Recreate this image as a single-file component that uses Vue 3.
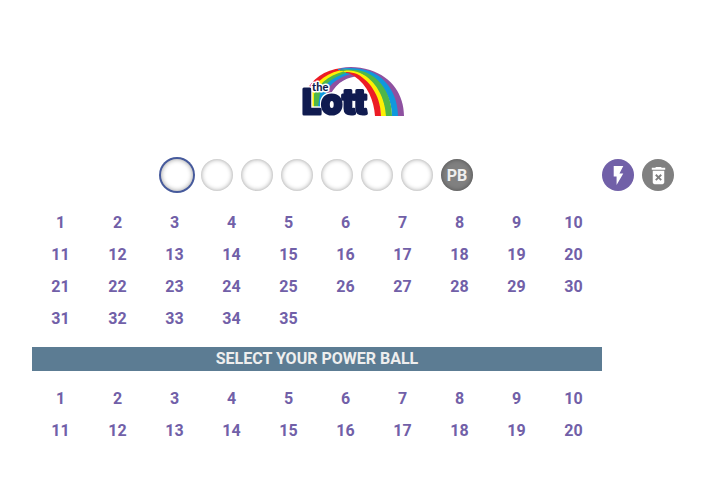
<script setup>
import { ref } from 'vue'

const mainNumbers = Array.from({ length: 35 }, (_, i) => i + 1)
const powerNumbers = Array.from({ length: 20 }, (_, i) => i + 1)
const picks = ref([])
const power = ref(null)

function pick(n) {
  if (picks.value.includes(n)) picks.value = picks.value.filter((p) => p !== n)
  else if (picks.value.length < 7) picks.value.push(n)
}
function quickPick() {
  picks.value = [...mainNumbers].sort(() => Math.random() - 0.5).slice(0, 7)
  power.value = 1 + Math.floor(Math.random() * 20)
}
function clear() {
  picks.value = []
  power.value = null
}
</script>

<template>
  <main class="page">
    <header class="brand">
      <svg class="logo" viewBox="0 0 102 50" role="img" aria-label="the Lott">
        <!-- near end of the rainbow -->
        <path fill="#ec1c24" d="M3 26 C10 12 22 3 40 1 L48 3 C30 6 18 14 8 30Z" />
        <path fill="#fdf003" d="M7 27 C14 14 26 5 44 2 L52 4 C34 8 22 16 14 32 L13 40 L9 40Z" />
        <path fill="#4fb648" d="M12 27 C19 14 30 6 49 3 L54 6 C38 10 28 18 22 30 L18 40 L12 40Z" />
        <path fill="#0f98dd" d="M18 26 C24 15 35 7 52 4 L57 7 C42 11 31 18 27 28 L22 40 L16 40Z" />
        <path fill="#8e51a0" d="M24 26 C28 16 38 9 53 6 L58 9 C45 10 36 14 28 28Z" />
        <!-- far end of the rainbow -->
        <path fill="#8e51a0" d="M39 1 C48 -1 58 0 68 3 C90 10 102 28 102 49 H95 C95 30 84 12 66 5 C57 2 48 1 39 2Z" />
        <path fill="#0f98dd" d="M36 2 C46 0 58 1 67 4 C86 11 96 30 96 49 H90 C90 31 80 14 63 6 C54 3 44 2 36 3Z" />
        <path fill="#4fb648" d="M38 3 C46 2 55 2 63 5 C81 12 90 31 90 49 H83 C83 32 74 15 59 7 C51 4 45 4 38 4Z" />
        <path fill="#fdf003" d="M42 4 C48 3 53 4 58 6 C74 13 83 31 84 49 H79 C78 33 70 16 55 8 C50 6 46 5 42 5Z" />
        <path fill="#ec1c24" d="M44 5 C49 5 52 6 55 7 C70 15 79 32 79 49 H73 C72 34 66 18 52 9 C49 7 47 6 44 6Z" />
        <text class="logo-word" x="0" y="47">Lott</text>
        <text class="logo-the" x="10" y="24">the</text>
      </svg>
    </header>

    <section class="ticket">
      <div class="balls">
        <span v-for="i in 7" :key="i" class="ball" :class="{ active: i === picks.length + 1 }">{{ picks[i - 1] }}</span>
        <span class="ball power">{{ power ?? 'PB' }}</span>
      </div>
      <div class="actions">
        <button type="button" class="action quick" aria-label="Quick pick" @click="quickPick">
          <svg viewBox="0 0 24 24"><path d="M7 2v11h3v9l7-12h-4l4-8z" /></svg>
        </button>
        <button type="button" class="action" aria-label="Clear" @click="clear">
          <svg viewBox="0 0 24 24"><path d="M6 19c0 1.100.9 2 2 2h8c1.100 0 2-.9 2-2V7H6v12zm2.460-7.120l1.410-1.410L12 12.590l2.120-2.120 1.410 1.410L13.410 14l2.120 2.120-1.410 1.410L12 15.410l-2.120 2.120-1.410-1.410L10.590 14l-2.130-2.120zM15.500 4l-1-1h-5l-1 1H5v2h14V4z" /></svg>
        </button>
      </div>

      <div class="numbers">
        <button v-for="n in mainNumbers" :key="n" type="button" class="number" @click="pick(n)">{{ n }}</button>
      </div>
      <h2 class="banner">SELECT YOUR POWER BALL</h2>
      <div class="numbers">
        <button v-for="n in powerNumbers" :key="n" type="button" class="number" @click="power = n">{{ n }}</button>
      </div>
    </section>
  </main>
</template>

<style>
body {
  margin: 0;
  background: #fff;
}
</style>

<style scoped>
.page {
  padding: 67px 31px 32px 32px;
  font-family: Roboto, "Liberation Sans", sans-serif;
  font-size: 16px;
  font-weight: 700;
}
.brand {
  display: flex;
  justify-content: center;
  margin-bottom: 42px;
}
.logo {
  width: 102px;
  height: 50px;
  overflow: visible;
}
.logo-word,
.logo-the {
  font-family: Inter, sans-serif;
  font-weight: 800;
  fill: #101b50;
  stroke-linejoin: round;
}
.logo-word {
  font-size: 34px;
  stroke: #101b50;
  stroke-width: 3;
  filter: drop-shadow(1px 0 0 #fff) drop-shadow(-1px 0 0 #fff) drop-shadow(0 -1px 0 #fff);
}
.logo-the {
  font-family: Lato, sans-serif;
  font-size: 11px;
  font-weight: 900;
  stroke: #fff;
  stroke-width: 3;
  paint-order: stroke;
}
.ticket {
  display: grid;
  grid-template-columns: 1fr 72px;
}
.balls,
.actions {
  display: flex;
  gap: 8px;
  align-items: center;
  height: 32px;
}
.balls {
  justify-content: center;
}
.ball {
  display: flex;
  align-items: center;
  justify-content: center;
  width: 32px;
  height: 32px;
  border-radius: 50%;
  box-shadow: inset 0 0 5px rgba(0, 0, 0, 0.4);
  color: #7160a8;
}
.active {
  box-shadow: 0 0 0 2px #465a9c, inset 0 0 5px rgba(0, 0, 0, 0.4);
}
.power {
  background: #808080;
  color: #eee;
}
button {
  padding: 0;
  border: 0;
  background: none;
  font: inherit;
  cursor: pointer;
}
.action {
  display: flex;
  align-items: center;
  justify-content: center;
  width: 32px;
  height: 32px;
  border-radius: 50%;
  background: #808080;
}
.quick {
  background: #7160a8;
}
.action svg {
  width: 23px;
  height: 23px;
  fill: #fff;
}
.numbers {
  grid-column: 1;
  display: grid;
  grid-template-columns: repeat(10, 1fr);
  grid-auto-rows: 32px;
  margin-top: 15px;
}
.number {
  color: #7160a8;
}
.banner {
  grid-column: 1;
  margin: 13px 0 -4px;
  background: #5c7c93;
  color: #eee;
  font-size: 16px;
  line-height: 24px;
  text-align: center;
}
</style>
